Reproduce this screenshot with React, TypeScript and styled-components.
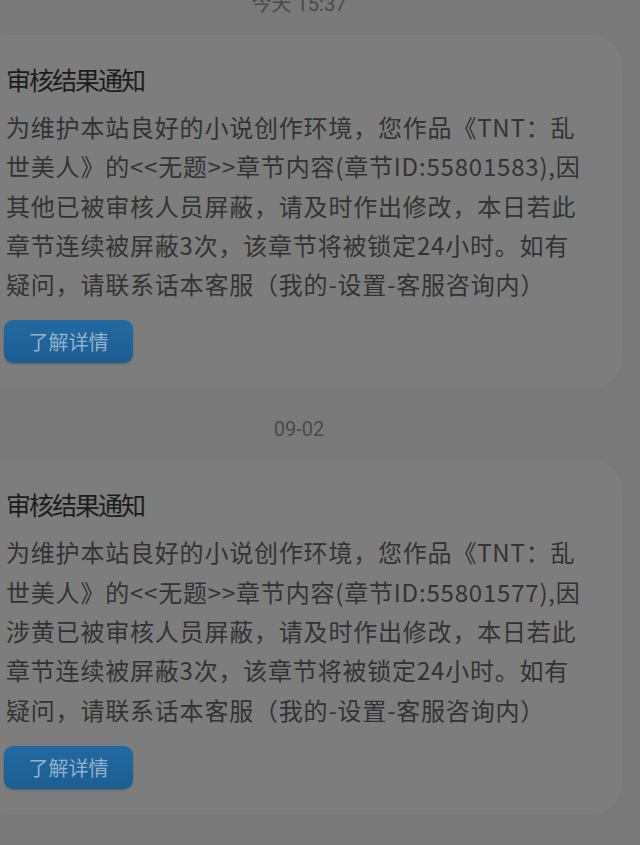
import styled, { createGlobalStyle } from "styled-components";

const GlobalStyle = createGlobalStyle`
  html, body {
    margin: 0;
    padding: 0;
    background: #797979;
    overflow: hidden;
  }
  body {
    font-family: "Noto Sans CJK SC", "Noto Sans", sans-serif;
  }
`;

const Feed = styled.div`
  width: 640px;
  height: 845px;
  overflow: hidden;
  display: flex;
  flex-direction: column;
  .inner {
    margin-top: -37px;
    display: flex;
    flex-direction: column;
  }
`;

const DateLabel = styled.div`
  padding: 31px 0 21px;
  line-height: 20px;
  font-family: Roboto, "Noto Sans CJK SC", sans-serif;
  font-size: 20px;
  color: #4b4b4b;
  text-align: center;
  margin-left: -42px;
`;

const Card = styled.div`
  margin-left: -22px;
  width: 644px;
  box-sizing: border-box;
  padding: 26px 0 25px 28px;
  background: #7d7d7d;
  border-radius: 30px;
  display: flex;
  flex-direction: column;
  align-items: flex-start;
`;

const Title = styled.div`
  font-size: 25px;
  line-height: 36px;
  letter-spacing: -2px;
  color: #1c1c1c;
`;

const Body = styled.div`
  margin-top: 10px;
  font-size: 24px;
  line-height: 39.3px;
  letter-spacing: 0.8px;
  color: #333333;
  span {
    display: block;
    white-space: nowrap;
  }
`;

const DetailButton = styled.button`
  margin: 17px 0 0 -2px;
  width: 129px;
  height: 43px;
  border: none;
  border-radius: 9px;
  background: linear-gradient(#2369a1, #1b5e92);
  box-shadow: 0 1px 2px rgba(0, 0, 0, 0.25);
  color: #92b2ca;
  font-family: "Noto Sans CJK SC", sans-serif;
  font-size: 20px;
  padding: 0;
`;

type Notice = { date: string; id: string; reason: string };

const notices: Notice[] = [
  { date: "今天 15:37", id: "55801583", reason: "其他" },
  { date: "09-02", id: "55801577", reason: "涉黄" },
];

const NoticeCard = ({ id, reason }: Notice) => (
  <Card>
    <Title>审核结果通知</Title>
    <Body>
      <span>为维护本站良好的小说创作环境，您作品《TNT：乱</span>
      <span>世美人》的&lt;&lt;无题&gt;&gt;章节内容(章节ID:{id}),因</span>
      <span>{reason}已被审核人员屏蔽，请及时作出修改，本日若此</span>
      <span>章节连续被屏蔽3次，该章节将被锁定24小时。如有</span>
      <span>疑问，请联系话本客服（我的-设置-客服咨询内）</span>
    </Body>
    <DetailButton>了解详情</DetailButton>
  </Card>
);

const App = () => {
  return (
    <>
      <GlobalStyle />
      <Feed>
        <div className="inner">
          {notices.map((n) => (
            <div key={n.id}>
              <DateLabel>{n.date}</DateLabel>
              <NoticeCard {...n} />
            </div>
          ))}
          <DateLabel>09-02</DateLabel>
        </div>
      </Feed>
    </>
  );
};

export default App;
